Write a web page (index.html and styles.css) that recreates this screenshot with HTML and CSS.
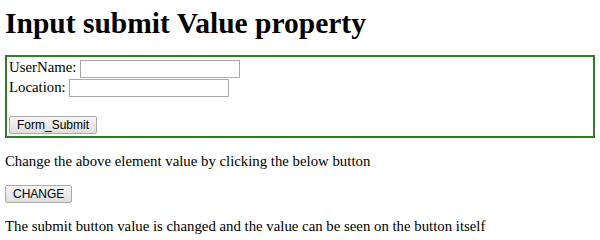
FILE: index.html
```html
<!DOCTYPE html>
<html lang="en">
<head>
  <meta charset="UTF-8" />
  <title>Input submit Value property</title>
  <link rel="stylesheet" href="styles.css">
</head>
<body>
  <h1>Input submit Value property</h1>
  <form class="caja" id="form1">
    UserName: <input type="text" name="uname"><br>
    Location: <input type="text" name="loc"><br><br>
    <input type="submit" id="sub1" value="Form_Submit">
  </form>
  <p>Change the above element value by clicking the below button</p>
  <button type="button" onclick="cambiar()">CHANGE</button>
  <p id="msg">The submit button value is changed and the value can be seen on the button itself</p>
  <script>
    function cambiar() {
      document.getElementById("sub1").value = "newSubmitButton";
    }
  </script>
</body>
</html>
```
FILE: styles.css
```css
body {
  font-family: 'Liberation Serif', serif;
  margin: 5px;
  color: #000;
  font-size: 14.8px;
}
h1 {
  font-size: 29.5px;
  margin: 2px 0 15px;
}
.caja {
  border: 2px solid #2e7d2e;
  padding: 1px 2px 2px;
  line-height: 18px;
}
input[type="text"] {
  box-sizing: border-box;
  width: 160px;
  height: 18px;
  border: 1px solid #aaa;
  padding: 1px 2px;
  font-size: 13px;
  vertical-align: middle;
}
input[type="submit"], button {
  font-family: 'Liberation Sans', sans-serif;
  font-size: 12px;
  line-height: 16px;
  padding: 0 7px;
  margin: 0;
  border: 1px solid #aaa;
  border-radius: 2px;
  background: linear-gradient(#f6f6f6, #dedede);
  color: #000;
}
p {
  margin: 15px 0;
}
```
